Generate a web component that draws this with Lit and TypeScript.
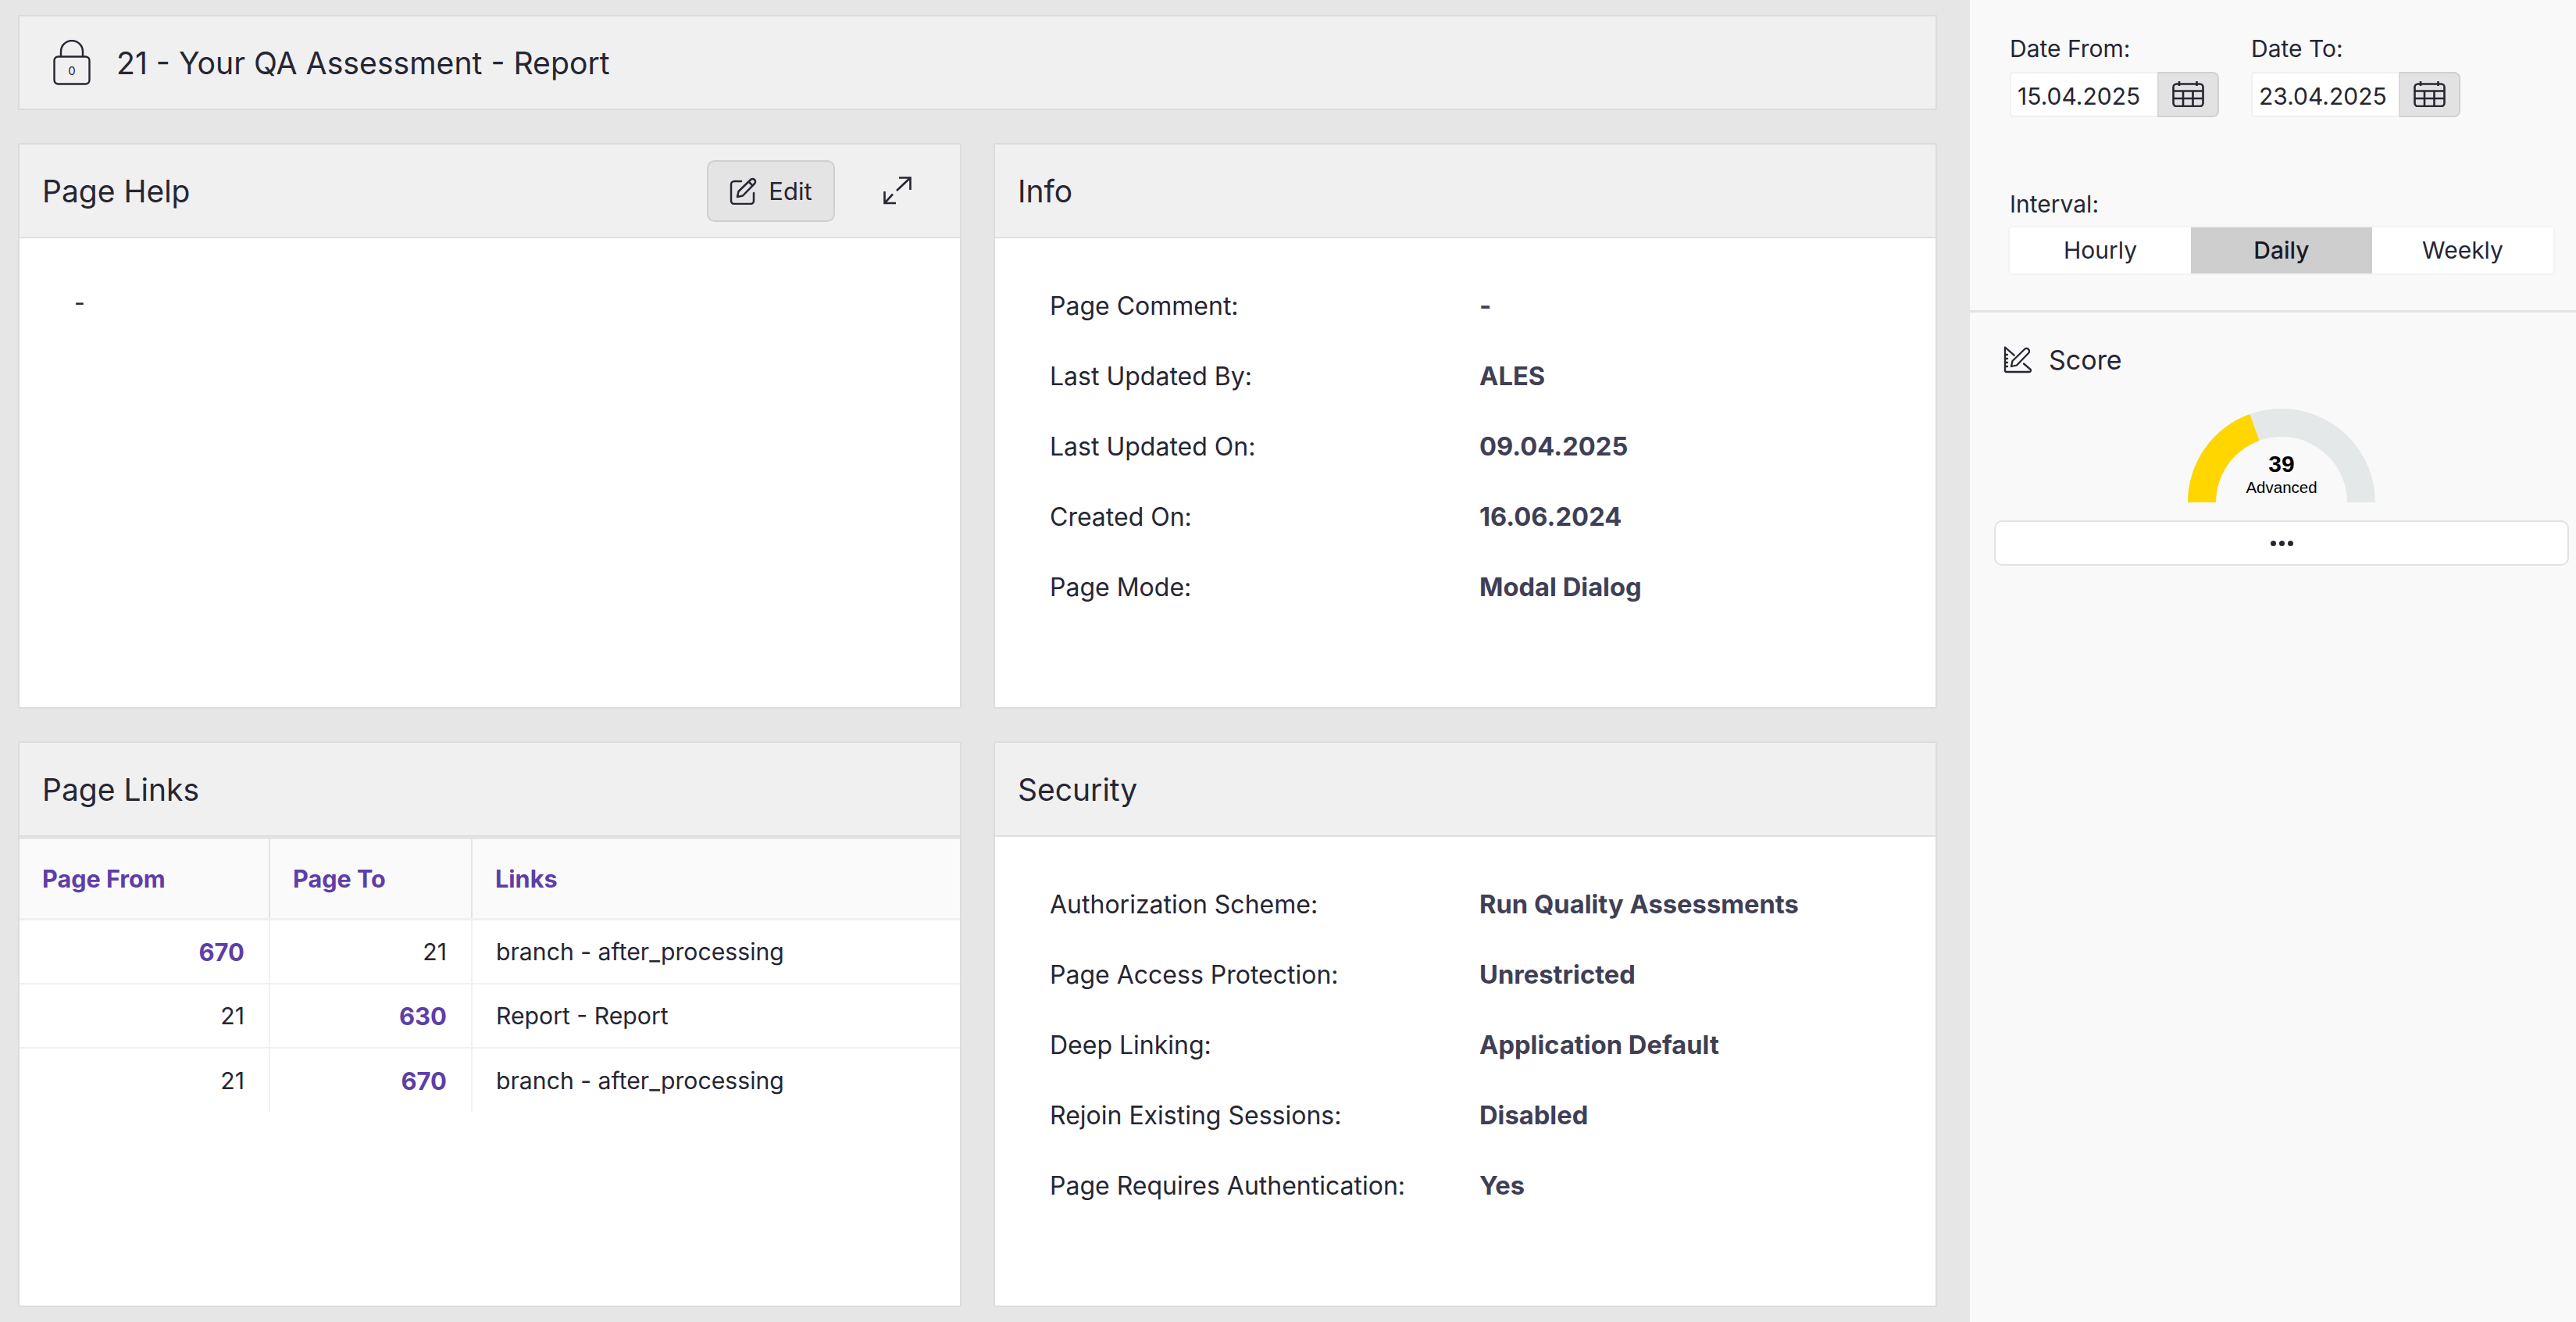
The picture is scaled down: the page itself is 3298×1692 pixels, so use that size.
import { LitElement, html, css, svg } from "lit";
import { customElement } from "lit/decorators.js";

const lockIcon = html`<svg width="48" height="58" viewBox="0 0 48 58" fill="none" stroke="#262633" stroke-width="2.4">
  <rect x="1.5" y="21.5" width="45" height="35" rx="5"></rect>
  <path d="M10 21V15a14 14 0 0 1 28 0v6"></path>
  <text x="24" y="45" text-anchor="middle" font-size="15" font-family="Inter, sans-serif" fill="#262633" stroke="none">0</text>
</svg>`;

const editIcon = html`<svg width="36" height="36" viewBox="0 0 36 36" fill="none" stroke="#262633" stroke-width="2.5" stroke-linecap="round" stroke-linejoin="round">
  <path d="M15 6H6a4 4 0 0 0-4 4v21a4 4 0 0 0 4 4h21a4 4 0 0 0 4-4V21"></path>
  <path d="M10 26l1.500-7L27 4a3.400 3.400 0 0 1 5 5L17 24.500Z"></path>
  <path d="M24.500 6.500l5 5"></path>
</svg>`;

const expandIcon = html`<svg width="38" height="38" viewBox="0 0 38 38" fill="none" stroke="#262633" stroke-width="2.6">
  <path d="M22 2.500H36.500V18M36.500 2.500L19 19"></path>
  <path d="M3.500 20V35H18M3.500 35L14 23.500"></path>
</svg>`;

const calendarIcon = html`<svg width="42" height="34" viewBox="0 0 42 34" fill="none" stroke="#262633" stroke-width="2.6">
  <rect x="1.500" y="4.500" width="38" height="28.500" rx="4"></rect>
  <path d="M1.500 13.500h38M1.500 23h38M14 13.500V33M26.500 13.500V33M9 1v6M31.500 1v6"></path>
</svg>`;

const scoreIcon = html`<svg width="36" height="36" viewBox="0 0 36 36" fill="none" stroke="#262633" stroke-width="2.3" stroke-linejoin="round" stroke-linecap="round">
  <path d="M13.700 11.700L2 1.500V31a2 2 0 0 0 2 2h29a2 2 0 0 0 1.400-3.400L26 22.500"></path>
  <path d="M2 11h3M2 16h3M2 21h3M2 26h3"></path>
  <path d="M10 26l1.500-7L27 4a3.400 3.400 0 0 1 5 5L17 24.500Z"></path>
</svg>`;

// 39 of 100 on a half circle, center (120,120), radii 120 and 84
const polar = (r: number, pct: number) => {
  const a = Math.PI * (pct / 100);
  return `${120 - r * Math.cos(a)} ${120 - r * Math.sin(a)}`;
};
const gaugeArc = (from: number, to: number) =>
  `M${polar(120, from)} A120 120 0 0 1 ${polar(120, to)} L${polar(84, to)} A84 84 0 0 0 ${polar(84, from)} Z`;

const info = [
  ["Page Comment:", "-"],
  ["Last Updated By:", "ALES"],
  ["Last Updated On:", "09.04.2025"],
  ["Created On:", "16.06.2024"],
  ["Page Mode:", "Modal Dialog"],
];

const security = [
  ["Authorization Scheme:", "Run Quality Assessments"],
  ["Page Access Protection:", "Unrestricted"],
  ["Deep Linking:", "Application Default"],
  ["Rejoin Existing Sessions:", "Disabled"],
  ["Page Requires Authentication:", "Yes"],
];

const links = [
  { from: "670", to: "21", link: "branch - after_processing", hot: "from" },
  { from: "21", to: "630", link: "Report - Report", hot: "to" },
  { from: "21", to: "670", link: "branch - after_processing", hot: "to" },
];

@customElement("app-root")
export class AppRoot extends LitElement {
  static styles = css`
    :host {
      display: block;
      height: 1692px;
      font-family: Inter, "Liberation Sans", sans-serif;
      color: #262633;
      overflow: hidden;
    }
    .page {
      display: flex;
      height: 1692px;
    }
    .main {
      width: 2522px;
      box-sizing: border-box;
      padding: 19px 42px 19px 23px;
      background: #e6e6e6;
      display: grid;
      grid-template-columns: 1fr 1fr;
      grid-template-rows: 122px 724px 724px;
      gap: 42px 41px;
    }
    .titlebar {
      grid-column: 1 / 3;
      background: #f0f0f1;
      border: 2px solid #dcdcdc;
      box-sizing: border-box;
      display: flex;
      align-items: center;
      gap: 33px;
      padding-left: 43px;
      font-size: 39.2px;
    }
    .card {
      background: #fff;
      border: 2px solid #dcdcdc;
      border-radius: 3px;
      box-sizing: border-box;
      display: flex;
      flex-direction: column;
      min-width: 0;
    }
    .card-head {
      height: 120px;
      flex: none;
      box-sizing: border-box;
      background: #f0f0f1;
      border-bottom: 2px solid #dfdfdf;
      display: flex;
      align-items: center;
      padding: 0 62px 0 29px;
      font-size: 39px;
    }
    .spacer {
      flex: 1;
    }
    .edit {
      width: 164px;
      height: 79px;
      box-sizing: border-box;
      border: 2px solid #cfcfcf;
      border-radius: 10px;
      background: #e4e4e4;
      display: flex;
      align-items: center;
      justify-content: center;
      gap: 14px;
      font-size: 31px;
      margin-right: 60px;
    }
    .help {
      padding: 64px 0 0 70px;
      font-size: 30px;
    }
    .facts {
      padding: 41px 40px 0 70px;
      display: flex;
      flex-direction: column;
    }
    .fact {
      height: 90px;
      display: grid;
      grid-template-columns: 550px 1fr;
      align-items: center;
      font-size: 32px;
    }
    .fact b {
      font-size: 32.7px;
      font-weight: 700;
      color: #3f3f55;
    }
    .links {
      border-top: 3px solid #e4e4e4;
      font-size: 30.2px;
    }
    .row {
      display: grid;
      grid-template-columns: 321px 259px 1fr;
      height: 82px;
      border-bottom: 2px solid #f0f0f0;
      box-sizing: border-box;
    }
    .row:last-child {
      border-bottom: none;
    }
    .row.head {
      height: 104px;
      background: #fafafa;
      border-bottom: 3px solid #f0f0f0;
      font-weight: 700;
      font-size: 30.6px;
      color: #5e3ea8;
    }
    .row > div {
      display: flex;
      align-items: center;
      padding: 0 31px;
      border-right: 2px solid #f0f0f0;
    }
    .row > div:last-child {
      border-right: none;
      padding-left: 30px;
    }
    .row.head > div {
      padding: 0 29px;
      border-right-color: #e4e4e4;
    }
    .row .num {
      justify-content: flex-end;
    }
    .row .hot {
      font-weight: 700;
      font-size: 31px;
      color: #5e3ea8;
    }
    .side {
      flex: 1;
      background: #f9f9f9;
      display: flex;
      flex-direction: column;
    }
    .filters {
      height: 400px;
      box-sizing: border-box;
      flex: none;
      border-bottom: 3px solid #e2e2e2;
      padding: 44px 29px 0 51px;
      font-size: 30px;
    }
    .dates {
      display: flex;
      gap: 41px;
    }
    .label {
      line-height: 36px;
      margin-bottom: 12px;
    }
    .date {
      display: flex;
      height: 58px;
    }
    .date-value {
      width: 189px;
      box-sizing: border-box;
      background: #fff;
      border: 2px solid #f1f1f1;
      border-right: none;
      border-radius: 4px 0 0 4px;
      padding: 3px 0 0 8px;
      display: flex;
      align-items: center;
      font-size: 30px;
    }
    .date-btn {
      width: 79px;
      box-sizing: border-box;
      background: #e2e2e2;
      border: 2px solid #d0d0d0;
      border-left-color: #d8d8d8;
      border-radius: 0 8px 8px 0;
      padding-bottom: 3px;
      display: flex;
      align-items: center;
      justify-content: center;
    }
    .interval {
      margin-top: 93px;
    }
    .interval .label {
      margin-bottom: 12px;
    }
    .radios {
      display: grid;
      grid-template-columns: 232px 232px 232px;
      height: 59px;
      background: #fff;
      border-radius: 4px;
      box-shadow: 0 0 0 2px #f3f3f3;
      text-align: center;
      line-height: 59px;
    }
    .radios .on {
      background: #cecece;
      font-weight: 500;
      color: #1a1a22;
    }
    .score {
      padding: 40px 9px 0 31px;
    }
    .score-head {
      display: flex;
      align-items: center;
      gap: 22px;
      font-size: 34px;
      padding-left: 12px;
    }
    .gauge {
      position: relative;
      width: 240px;
      height: 120px;
      margin: 42px auto 23px;
    }
    .gauge svg {
      display: block;
    }
    .gauge-text {
      position: absolute;
      left: 0;
      right: 0;
      top: 54px;
      text-align: center;
      color: #000;
      font-family: "Liberation Sans", Arial, sans-serif;
    }
    .gauge-num {
      font-size: 30px;
      font-weight: 700;
      line-height: 34px;
    }
    .gauge-cap {
      font-size: 20.5px;
      line-height: 26px;
    }
    .more {
      height: 58px;
      box-sizing: border-box;
      background: #fff;
      border: 2px solid #e2e2e2;
      border-radius: 10px;
      display: flex;
      align-items: center;
      justify-content: center;
      gap: 4px;
    }
    .more i {
      width: 7px;
      height: 7px;
      border-radius: 50%;
      background: #262633;
    }
  `;

  renderFacts(rows: string[][]) {
    return html`<div class="facts">
      ${rows.map(
        ([k, v]) => html`<div class="fact"><span>${k}</span><b>${v}</b></div>`
      )}
    </div>`;
  }

  renderDate(label: string, value: string) {
    return html`<div>
      <div class="label">${label}</div>
      <div class="date">
        <div class="date-value">${value}</div>
        <div class="date-btn">${calendarIcon}</div>
      </div>
    </div>`;
  }

  render() {
    return html`
      <div class="page">
        <div class="main">
          <div class="titlebar">${lockIcon}<span>21 - Your QA Assessment - Report</span></div>
          <section class="card">
            <div class="card-head">
              <span>Page Help</span>
              <span class="spacer"></span>
              <div class="edit">${editIcon}<span>Edit</span></div>
              ${expandIcon}
            </div>
            <div class="help">-</div>
          </section>
          <section class="card">
            <div class="card-head">Info</div>
            ${this.renderFacts(info)}
          </section>
          <section class="card">
            <div class="card-head">Page Links</div>
            <div class="links">
              <div class="row head">
                <div>Page From</div>
                <div>Page To</div>
                <div>Links</div>
              </div>
              ${links.map(
                (r) => html`<div class="row">
                  <div class="num ${r.hot === "from" ? "hot" : ""}">${r.from}</div>
                  <div class="num ${r.hot === "to" ? "hot" : ""}">${r.to}</div>
                  <div>${r.link}</div>
                </div>`
              )}
            </div>
          </section>
          <section class="card">
            <div class="card-head">Security</div>
            ${this.renderFacts(security)}
          </section>
        </div>
        <aside class="side">
          <div class="filters">
            <div class="dates">
              ${this.renderDate("Date From:", "15.04.2025")}
              ${this.renderDate("Date To:", "23.04.2025")}
            </div>
            <div class="interval">
              <div class="label">Interval:</div>
              <div class="radios">
                <div>Hourly</div>
                <div class="on">Daily</div>
                <div>Weekly</div>
              </div>
            </div>
          </div>
          <div class="score">
            <div class="score-head">${scoreIcon}<span>Score</span></div>
            <div class="gauge">
              <svg width="240" height="120" viewBox="0 0 240 120">
                ${svg`<path d=${gaugeArc(0, 100)} fill="#e5e8e8"></path>
                <path d=${gaugeArc(0, 39)} fill="#ffd600"></path>`}
              </svg>
              <div class="gauge-text">
                <div class="gauge-num">39</div>
                <div class="gauge-cap">Advanced</div>
              </div>
            </div>
            <div class="more"><i></i><i></i><i></i></div>
          </div>
        </aside>
      </div>
    `;
  }
}
